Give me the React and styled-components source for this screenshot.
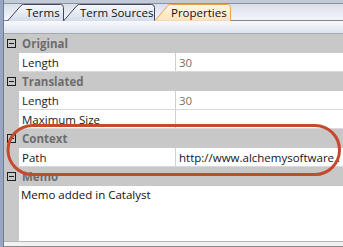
import React from 'react';
import styled, { createGlobalStyle } from 'styled-components';

const Global = createGlobalStyle`
  html, body { margin: 0; padding: 0; background: #fff; }
  body { font-family: "Open Sans", "Noto Sans", sans-serif; font-size: 11.5px; color: #1a1a1a; }
  #root { width: 343px; height: 247px; overflow: hidden; }
`;

const Frame = styled.div`
  position: relative;
  display: flex;
  width: 343px;
  height: 247px;
  overflow: hidden;
`;

const SideStrip = styled.div`
  flex: none;
  width: 3px;
  background: #97a6c3;
  border-right: 1px solid #6f7c96;
`;

const Main = styled.div`
  flex: 1;
  min-width: 0;
  display: flex;
  flex-direction: column;
`;

const TabStrip = styled.div`
  flex: none;
  height: 20px;
  box-sizing: content-box;
  display: flex;
  align-items: flex-end;
  padding-left: 3px;
  border-bottom: 1px solid #7f8591;
  background: linear-gradient(
    to bottom,
    #c3cad7 0px,
    #c3cad7 3px,
    #8b93a3 3px,
    #8b93a3 4px,
    #d9dfea 4px,
    #f4f6fa 100%
  );
`;

const TabWrap = styled.div`
  position: relative;
  flex: none;
  width: ${(p) => p.$w}px;
  height: 17px;
  margin-left: ${(p) => (p.$first ? 0 : -1)}px;
  margin-bottom: -1px;
  z-index: ${(p) => (p.$active ? 3 : 1)};
`;

const TabShape = styled.svg`
  position: absolute;
  left: 0;
  top: 0;
`;

const TabLabel = styled.span`
  position: relative;
  display: block;
  padding-left: ${(p) => p.$pad}px;
  line-height: 17px;
  font-size: 11.5px;
  color: #111;
  white-space: nowrap;
`;

const Tab = ({ w, pad, active, first, children }) => {
  const h = 17;
  const path = `M0.5,${h} L14,1.5 Q15,0.5 16.5,0.5 L${w - 3.5},0.5 Q${w - 0.5},0.5 ${w - 0.5},3.5 L${w - 0.5},${h}`;
  const id = `g${w}`;
  return (
    <TabWrap $w={w} $active={active} $first={first}>
      <TabShape width={w} height={h} viewBox={`0 0 ${w} ${h}`}>
        <defs>
          <linearGradient id={id} x1="0" y1="0" x2="0" y2="1">
            {active ? (
              <>
                <stop offset="0" stopColor="#fff6e6" />
                <stop offset="1" stopColor="#fde3bd" />
              </>
            ) : (
              <>
                <stop offset="0" stopColor="#f4f6fb" />
                <stop offset="0.5" stopColor="#e6ebf5" />
                <stop offset="1" stopColor="#d3dbea" />
              </>
            )}
          </linearGradient>
        </defs>
        <path d={path + ' Z'} fill={`url(#${id})`} stroke="none" />
        <path d={path} fill="none" stroke={active ? '#e8a24c' : '#3f4654'} strokeWidth="1" />
        {active && <line x1="1" y1={h - 0.5} x2={w - 1} y2={h - 0.5} stroke="#f6d9ae" />}
      </TabShape>
      <TabLabel $pad={pad}>{children}</TabLabel>
    </TabWrap>
  );
};

const SubBand = styled.div`
  flex: none;
  height: 12px;
  background: linear-gradient(to bottom, #f8f9fc, #dde3ee);
  border-bottom: 1px solid #a5a9b1;
`;

const Grid = styled.div`
  flex: 1;
  display: flex;
  flex-direction: column;
  background: #c8c8c8;
`;

const CategoryRow = styled.div`
  flex: none;
  height: 19px;
  display: flex;
  align-items: center;
  font-weight: 700;
  color: #6d6d6d;
`;

const ToggleBox = styled.span`
  flex: none;
  position: relative;
  box-sizing: border-box;
  width: 9px;
  height: 9px;
  margin-left: 3px;
  margin-right: 6px;
  border: 1px solid #1e1e1e;
  &::after {
    content: '';
    position: absolute;
    left: 1px;
    right: 1px;
    top: 3px;
    height: 1px;
    background: #1e1e1e;
  }
`;

const PropRow = styled.div`
  flex: none;
  height: 19px;
  box-sizing: border-box;
  margin-left: 15px;
  display: grid;
  grid-template-columns: 156px 1fr;
  background: #fff;
  border-bottom: 1px solid #d9d9d9;
`;

const NameCell = styled.div`
  display: flex;
  align-items: center;
  padding-left: 3px;
  color: #1a1a1a;
  white-space: nowrap;
`;

const ValueCell = styled.div`
  display: flex;
  align-items: center;
  min-width: 0;
  padding-left: 3px;
  border-left: 1px solid #d0d0d0;
  color: ${(p) => (p.$muted ? '#7a6f66' : '#141428')};
  white-space: nowrap;
  overflow: hidden;
`;

const MemoArea = styled.div`
  flex: 1;
  margin-left: 15px;
  background: #fff;
  padding: 1px 0 0 2px;
  line-height: 16px;
  color: #111;
`;

const Footer = styled.div`
  flex: none;
  height: 4px;
  border-top: 1px solid #b4b4b4;
  border-bottom: 1px solid #8a8a8a;
  background: #f1f1f1;
`;

const Highlight = styled.svg`
  position: absolute;
  left: 0;
  top: 0;
  pointer-events: none;
`;

const Category = ({ children }) => (
  <CategoryRow>
    <ToggleBox />
    {children}
  </CategoryRow>
);

const Prop = ({ name, value, muted }) => (
  <PropRow>
    <NameCell>{name}</NameCell>
    <ValueCell $muted={muted}>{value}</ValueCell>
  </PropRow>
);

export default function App() {
  return (
    <>
      <Global />
      <Frame>
        <SideStrip />
        <Main>
          <TabStrip>
            <Tab w={57} pad={19} first>Terms</Tab>
            <Tab w={92} pad={17}>Term Sources</Tab>
            <Tab w={77} pad={17} active>Properties</Tab>
          </TabStrip>
          <SubBand />
          <Grid>
            <Category>Original</Category>
            <Prop name="Length" value="30" muted />
            <Category>Translated</Category>
            <Prop name="Length" value="30" muted />
            <Prop name="Maximum Size" value="" />
            <Category>Context</Category>
            <Prop name="Path" value="http://www.alchemysoftware.." />
            <Category>Memo</Category>
            <MemoArea>Memo added in Catalyst</MemoArea>
            <Footer />
          </Grid>
        </Main>
        <Highlight width="343" height="247" viewBox="0 0 343 247">
          <rect x="8" y="125.5" width="331.5" height="49" rx="24.5" ry="24.5"
            fill="none" stroke="#c4492f" strokeWidth="3" />
        </Highlight>
      </Frame>
    </>
  );
}
